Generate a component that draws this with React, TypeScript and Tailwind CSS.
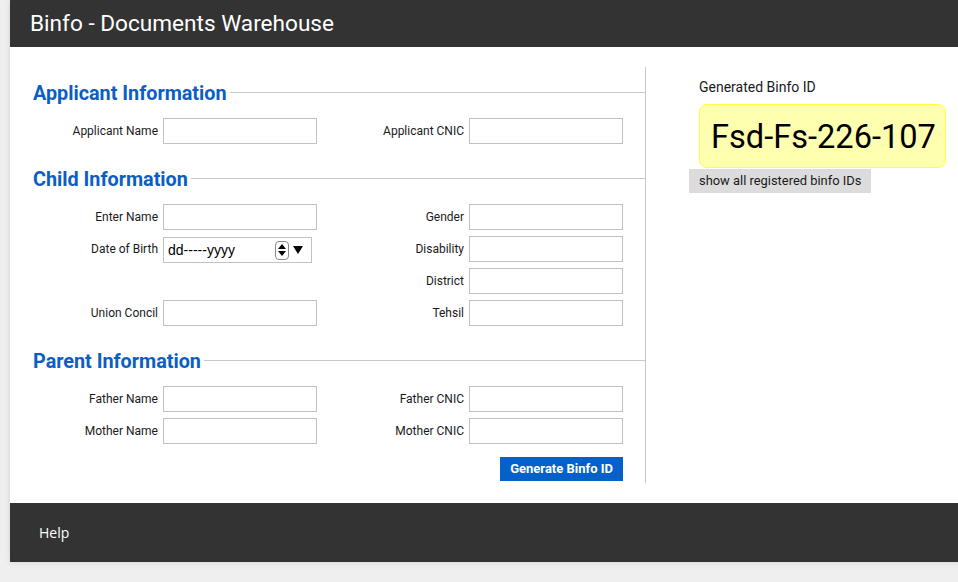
import React from 'react';

const roboto = { fontFamily: 'Roboto, "Liberation Sans", sans-serif' };

const Field = ({ label, labelW }: { label: string; labelW: string }) => (
  <div className="flex items-center">
    <label className={`${labelW} text-right text-[12px] text-[#1a1a1a] pr-[5px]`}>{label}</label>
    <input className="w-[154px] h-[26px] border border-[#c2c2c2] bg-white outline-none" />
  </div>
);

const Empty = ({ labelW }: { labelW: string }) => <div className={`${labelW} h-[26px]`} />;

const DateField = () => (
  <div className="flex items-center">
    <label className="w-[130px] text-right text-[12px] text-[#1a1a1a] pr-[5px] -mt-[1px]">Date of Birth</label>
    <div className="w-[149px] h-[26px] border border-[#c2c2c2] bg-white flex items-center pl-[4px] pr-[8px] translate-y-[1px]">
      <span className="flex-1 text-[14px] text-black" style={{ fontFamily: '"Liberation Sans", sans-serif' }}>dd-----yyyy</span>
      <div className="w-[14px] h-[19px] border border-[#8a8a8a] rounded-[4px] flex flex-col items-center justify-center gap-[2px]">
        <svg width="8" height="5" viewBox="0 0 8 5"><path d="M4 0 L8 5 L0 5 Z" fill="#000" /></svg>
        <svg width="8" height="5" viewBox="0 0 8 5"><path d="M0 0 L8 0 L4 5 Z" fill="#000" /></svg>
      </div>
      <svg className="ml-[4px]" width="10" height="8" viewBox="0 0 10 8"><path d="M0 0 L10 0 L5 8 Z" fill="#000" /></svg>
    </div>
  </div>
);

const Heading = ({ children, first }: { children: string; first?: boolean }) => (
  <div className={`flex items-center ${first ? '' : 'mt-[23px]'} mb-[12px]`}>
    <h2 className="text-[19.8px] leading-[24px] pt-[1px] font-bold text-[#0a5ec4]">{children}</h2>
    <div className="flex-1 h-px bg-[#c8c8c8] ml-[3px] -mt-[2px]" />
  </div>
);

const Row = ({ children }: { children: React.ReactNode }) => (
  <div className="flex items-center">{children}</div>
);

export default function App() {
  return (
    <div className="min-h-screen w-full bg-[#efefef] overflow-hidden" style={roboto}>
      <div className="ml-[10px] w-[1000px] shadow-[0_0_6px_rgba(0,0,0,0.12)]">
        <header className="h-[47px] bg-[#333333] flex items-center pl-[20px]">
          <h1 className="text-[22.6px] text-white">Binfo - Documents Warehouse</h1>
        </header>

        <main className="bg-white h-[456px] pt-[20px] flex">
          <section className="w-[636px] h-[416px] border-r border-[#c8c8c8] pl-[23px] pt-[14px]">
            <Heading first>Applicant Information</Heading>
            <div className="flex flex-col gap-[6px]">
              <Row>
                <Field label="Applicant Name" labelW="w-[130px]" />
                <Field label="Applicant CNIC" labelW="w-[152px]" />
              </Row>
            </div>

            <Heading>Child Information</Heading>
            <div className="flex flex-col gap-[6px]">
              <Row>
                <Field label="Enter Name" labelW="w-[130px]" />
                <Field label="Gender" labelW="w-[152px]" />
              </Row>
              <Row>
                <DateField />
                <div className="w-[5px]" />
                <Field label="Disability" labelW="w-[152px]" />
              </Row>
              <Row>
                <Empty labelW="w-[284px]" />
                <Field label="District" labelW="w-[152px]" />
              </Row>
              <Row>
                <Field label="Union Concil" labelW="w-[130px]" />
                <Field label="Tehsil" labelW="w-[152px]" />
              </Row>
            </div>

            <Heading>Parent Information</Heading>
            <div className="flex flex-col gap-[6px]">
              <Row>
                <Field label="Father Name" labelW="w-[130px]" />
                <Field label="Father CNIC" labelW="w-[152px]" />
              </Row>
              <Row>
                <Field label="Mother Name" labelW="w-[130px]" />
                <Field label="Mother CNIC" labelW="w-[152px]" />
              </Row>
            </div>

            <div className="w-[590px] flex justify-end mt-[13px]">
              <button className="h-[24px] px-[10px] bg-[#0561c9] text-white text-[13px] font-bold">Generate Binfo ID</button>
            </div>
          </section>

          <aside className="pl-[53px] pt-[10px]">
            <p className="text-[14px] leading-[20px] text-[#1a1a1a]">Generated Binfo ID</p>
            <div className="mt-[7px] w-[247px] h-[64px] rounded-[8px] border border-[#ffff40] bg-[#ffffb0] flex items-center pl-[11px] pt-[3px]">
              <span className="text-[32.6px] text-black">Fsd-Fs-226-107</span>
            </div>
            <button className="-ml-[10px] h-[24px] px-[10px] bg-[#dcdcdc] text-[12.9px] text-[#1a1a1a]">show all registered binfo IDs</button>
          </aside>
        </main>

        <footer className="h-[59px] bg-[#333333] flex items-center pl-[29px]">
          <span className="text-[14px] text-white" style={{ fontFamily: '"Open Sans", sans-serif' }}>Help</span>
        </footer>
      </div>
    </div>
  );
}
